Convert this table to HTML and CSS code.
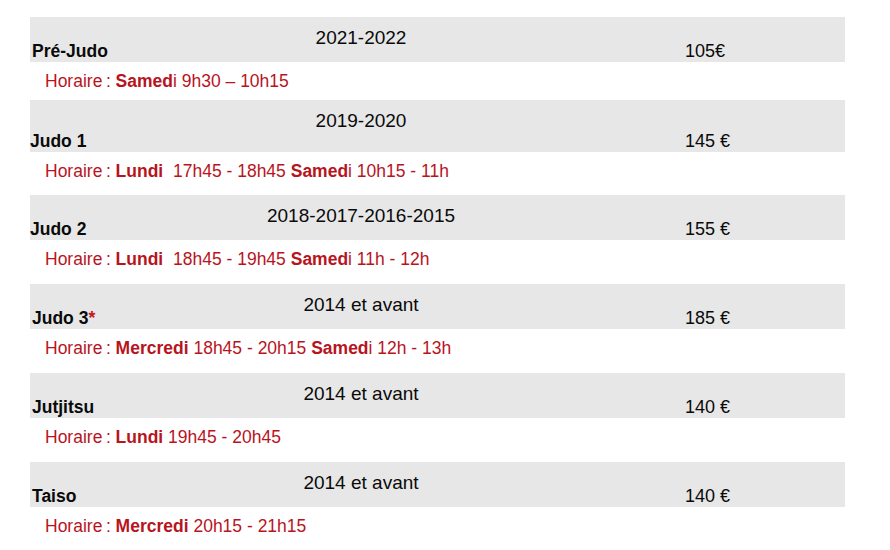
FILE: index.html
```html
<!DOCTYPE html>
<html lang="fr">
<head>
<meta charset="utf-8">
<title>Tarifs</title>
<link rel="stylesheet" href="styles.css">
</head>
<body>
<div class="list">
  <div class="item first">
    <div class="bar">
      <div class="name">Pré-Judo</div>
      <div class="year">2021-2022</div>
      <div class="price">105€</div>
    </div>
    <div class="hours">Horaire&#8239;: <b>Samed</b>i 9h30 – 10h15</div>
  </div>
  <div class="item second">
    <div class="bar tall">
      <div class="name shift">Judo 1</div>
      <div class="year">2019-2020</div>
      <div class="price">145 €</div>
    </div>
    <div class="hours">Horaire&#8239;: <b>Lundi</b>&nbsp; 17h45 - 18h45 <b>Samed</b>i 10h15 - 11h</div>
  </div>
  <div class="item">
    <div class="bar">
      <div class="name shift">Judo 2</div>
      <div class="year">2018-2017-2016-2015</div>
      <div class="price">155 €</div>
    </div>
    <div class="hours">Horaire&#8239;: <b>Lundi</b>&nbsp; 18h45 - 19h45 <b>Samed</b>i 11h - 12h</div>
  </div>
  <div class="item">
    <div class="bar">
      <div class="name">Judo 3<span class="star">*</span></div>
      <div class="year">2014 et avant</div>
      <div class="price">185 €</div>
    </div>
    <div class="hours">Horaire&#8239;: <b>Mercredi</b> 18h45 - 20h15 <b>Samed</b>i 12h - 13h</div>
  </div>
  <div class="item">
    <div class="bar">
      <div class="name">Jutjitsu</div>
      <div class="year">2014 et avant</div>
      <div class="price">140 €</div>
    </div>
    <div class="hours">Horaire&#8239;: <b>Lundi</b> 19h45 - 20h45</div>
  </div>
  <div class="item">
    <div class="bar">
      <div class="name">Taiso</div>
      <div class="year">2014 et avant</div>
      <div class="price">140 €</div>
    </div>
    <div class="hours">Horaire&#8239;: <b>Mercredi</b> 20h15 - 21h15</div>
  </div>
</div>
</body>
</html>
```
FILE: styles.css
```css
html, body {
  margin: 0;
  padding: 0;
  background: #ffffff;
}
body {
  font-family: "Liberation Sans", Arial, sans-serif;
  color: #0a0a0a;
}
.list {
  padding: 17px 0 0 30px;
  width: 815px;
}
.bar {
  height: 45px;
  box-sizing: border-box;
  background: #e7e7e7;
  display: grid;
  grid-template-columns: 210px 242px 1fr;
  padding: 10px 0 1px 0;
}
.bar.tall {
  height: 52px;
}
.name {
  align-self: end;
  font-size: 17.5px;
  line-height: 20px;
  font-weight: bold;
  padding-left: 2px;
}
.name.shift {
  padding-left: 0;
}
.star {
  color: #c8141e;
}
.year {
  align-self: start;
  text-align: center;
  font-size: 19px;
  line-height: 22px;
}
.price {
  align-self: end;
  font-size: 18px;
  line-height: 20px;
  padding-left: 203px;
}
.hours {
  height: 44px;
  box-sizing: border-box;
  padding: 9px 0 0 15px;
  font-size: 17.5px;
  line-height: 20px;
  color: #b8141e;
}
.hours b {
  font-weight: bold;
}
.first .hours {
  height: 38px;
}
.second .hours {
  height: 43px;
}
```
